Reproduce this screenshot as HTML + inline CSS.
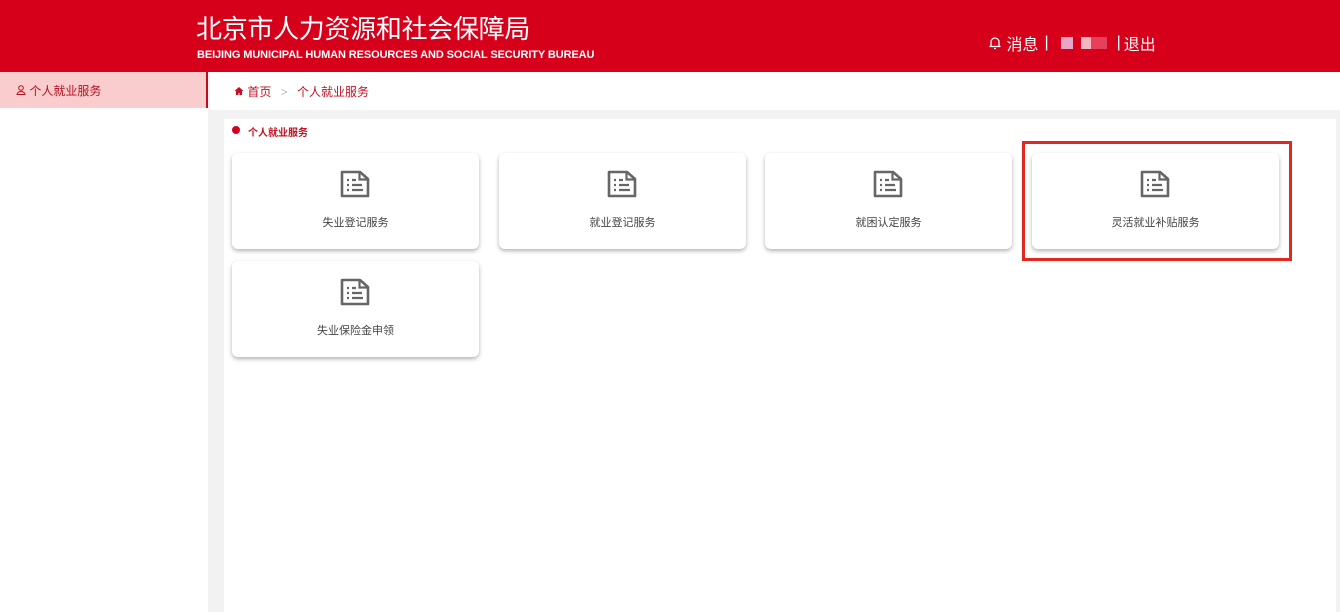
<!DOCTYPE html>
<html><head><meta charset="utf-8"><style>
*{margin:0;padding:0;box-sizing:border-box}
body{width:1340px;height:612px;overflow:hidden;background:#f2f2f2;font-family:"Liberation Sans","Noto Sans CJK SC",sans-serif;position:relative}
.hd{position:absolute;left:0;top:0;width:1340px;height:72px;background:#d6001b}
.t1{position:absolute;left:196px;top:9px;color:#fff;font-size:26px;letter-spacing:-0.3px}
.t2{position:absolute;left:197px;top:49px;color:#fff;font-size:11px;font-weight:bold;letter-spacing:-0.1px}
.rt{position:absolute;left:988px;top:31px;color:#fff;font-size:16px;display:flex;align-items:center}
.side{position:absolute;left:0;top:72px;width:208px;height:540px;background:#fff}
.sel{position:absolute;left:0;top:72px;width:208px;height:36px;background:#f9cccd;border-right:2px solid #b8101e;color:#b8101e;font-size:12px;padding:10px 0 0 16px}
.bc{position:absolute;left:210px;top:72px;width:1130px;height:38px;background:#fff;font-size:12px;color:#c41020;padding:11px 0 0 24px}
.panel{position:absolute;left:224px;top:119px;width:1112px;height:493px;background:#fff}
.sec{position:absolute;left:232px;top:124px;font-size:10px;font-weight:bold;color:#c41020}
.sec:before{content:"";position:absolute;left:0;top:2px;width:8px;height:8px;border-radius:50%;background:#d6001b}
.card{position:absolute;width:247px;height:96px;background:#fff;border-radius:6px;box-shadow:0 2px 4px rgba(0,0,0,.3);text-align:center}
.card svg{position:absolute;left:108px;top:17px}
.card span{position:absolute;left:0;right:0;top:61px;font-size:11px;color:#444}
.box{position:absolute;left:1022px;top:141px;width:270px;height:120px;border:3px solid #e5261f}
</style></head><body>
<div class="hd"></div>
<div class="t1">北京市人力资源和社会保障局</div>
<div class="t2">BEIJING MUNICIPAL HUMAN RESOURCES AND SOCIAL SECURITY BUREAU</div>
<div class="rt"><svg width="14" height="14" viewBox="0 0 14 14"><path d="M3 10V6a4 4 0 0 1 8 0v4M1.5 10.5h11M6 12.5h2" stroke="#fff" stroke-width="1.3" fill="none"/></svg>&nbsp;消息 <span style="margin:0 12px 0 6px">|</span><span style="display:inline-block;width:46px;height:12px;background:linear-gradient(90deg,#e7a6c8 0 12px,#d6001b 12px 20px,#f4b6c0 20px 30px,#e6405a 30px)"></span><span style="margin:0 3px 0 10px">|</span>退出</div>
<div class="side"></div>
<div class="sel"><svg width="10" height="10" viewBox="0 0 10 10"><circle cx="5" cy="3" r="2.3" stroke="#b8101e" fill="none"/><path d="M1 9.5a4 3 0 0 1 8 0z" stroke="#b8101e" fill="none"/></svg> 个人就业服务</div>
<div class="bc"><svg width="10" height="10" viewBox="0 0 10 10"><path d="M5 1L0.5 5H2v4h2.5V7h1v2H8V5h1.5z" fill="#c41020"/></svg> 首页 <span style="color:#bbb;margin:0 6px">&gt;</span> 个人就业服务</div>
<div class="panel"></div>
<div class="sec"><span style="margin-left:16px">个人就业服务</span></div>
<svg width="0" height="0" style="position:absolute"><defs><g id="ic"><path d="M2 2h18l8 7v17H2z" stroke="#666" stroke-width="2.6" fill="none" stroke-linejoin="round"/><path d="M19.5 2v7.5h8" stroke="#666" stroke-width="2.2" fill="none"/><path d="M7 10h2M12 10h4M7 15h2M12 15h10M7 20h2M12 20h11" stroke="#666" stroke-width="2.2"/></g></defs></svg>
<div class="card" style="left:232px;top:153px"><svg width="30" height="28" viewBox="0 0 30 28"><use href="#ic"/></svg><span>失业登记服务</span></div>
<div class="card" style="left:499px;top:153px"><svg width="30" height="28" viewBox="0 0 30 28"><use href="#ic"/></svg><span>就业登记服务</span></div>
<div class="card" style="left:765px;top:153px"><svg width="30" height="28" viewBox="0 0 30 28"><use href="#ic"/></svg><span>就困认定服务</span></div>
<div class="card" style="left:1032px;top:153px"><svg width="30" height="28" viewBox="0 0 30 28"><use href="#ic"/></svg><span>灵活就业补贴服务</span></div>
<div class="card" style="left:232px;top:261px"><svg width="30" height="28" viewBox="0 0 30 28"><use href="#ic"/></svg><span>失业保险金申领</span></div>
<div class="box"></div>
</body></html>
